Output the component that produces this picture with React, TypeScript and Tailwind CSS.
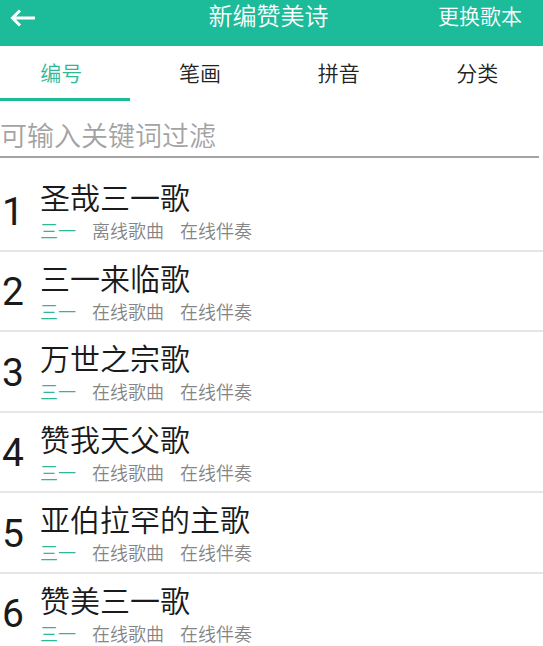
import React from "react";

const songs = [
  { n: 1, title: "圣哉三一歌", a: "离线歌曲", b: "在线伴奏" },
  { n: 2, title: "三一来临歌", a: "在线歌曲", b: "在线伴奏" },
  { n: 3, title: "万世之宗歌", a: "在线歌曲", b: "在线伴奏" },
  { n: 4, title: "赞我天父歌", a: "在线歌曲", b: "在线伴奏" },
  { n: 5, title: "亚伯拉罕的主歌", a: "在线歌曲", b: "在线伴奏" },
  { n: 6, title: "赞美三一歌", a: "在线歌曲", b: "在线伴奏" },
];

const tabs = ["编号", "笔画", "拼音", "分类"];

export default function App() {
  return (
    <div
      className="w-[543px] h-[646px] overflow-hidden bg-white"
      style={{ fontFamily: "Roboto, 'Noto Sans CJK SC', sans-serif" }}
    >
      {/* Header */}
      <div className="h-[46px] bg-[#1cbb9a] text-white">
        <div className="grid grid-cols-[1fr_auto_1fr] h-[35px] items-center">
          <div className="pl-[10px] flex items-center">
            <svg width="26" height="18" viewBox="0 0 26 18">
              <path
                d="M25 9 H3 M10 1.5 L2.5 9 L10 16.5"
                fill="none"
                stroke="white"
                strokeWidth="3"
                strokeLinecap="butt"
                strokeLinejoin="miter"
              />
            </svg>
          </div>
          <div className="text-center text-[24px] font-[350] leading-[35px] pr-[6px]">新编赞美诗</div>
          <div className="justify-self-end pr-[21px] text-[21px] font-[350] leading-[35px]">更换歌本</div>
        </div>
      </div>

      {/* Tabs */}
      <div className="flex h-[52px] pt-[5px] ml-[-8px]">
        {tabs.map((t, i) => (
          <div
            key={t}
            className={
              "w-[138.67px] shrink-0 flex items-center justify-center text-[21px] font-[350] " +
              (i === 0 ? "text-[#2fb898]" : "text-[#222222]")
            }
          >
            {t}
          </div>
        ))}
      </div>
      <div className="h-[3px] w-[130px] bg-[#1cbb9a]" />

      {/* Search */}
      <div className="pt-[18px] pb-[1px] border-b-2 border-[#a3a3a3] mr-[4px]">
        <div className="text-[27px] font-[350] leading-[36px] text-[#a3a3a3]">可输入关键词过滤</div>
      </div>

      {/* List */}
      <div className="mt-[13px]">
        {songs.map((s) => (
          <div key={s.n} className="flex h-[80.5px] border-b-2 border-[#e6e6e6]">
            <div className="w-[40px] shrink-0 flex items-center pl-[2px] pt-[3px] text-[39px] font-normal text-[#1a1a1a]">
              {s.n}
            </div>
            <div className="flex flex-col pt-[11px]">
              <div className="text-[30px] font-[350] leading-[34px] text-[#1a1a1a]">{s.title}</div>
              <div className="mt-[4px] flex gap-4 text-[18px] font-[350] leading-[24px] text-[#858585]">
                <span className="text-[#2fb898]">三一</span>
                <span>{s.a}</span>
                <span>{s.b}</span>
              </div>
            </div>
          </div>
        ))}
      </div>
    </div>
  );
}
